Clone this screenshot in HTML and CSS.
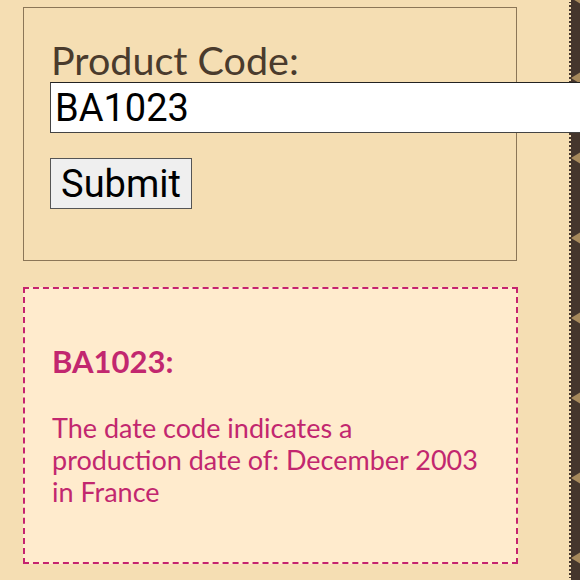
FILE: index.html
```html
<!DOCTYPE html>
<html>
<head>
<meta charset="utf-8">
<link rel="stylesheet" href="styles.css">
</head>
<body>
<div class="page">
  <main class="main">
    <form class="lookup">
      <label class="label" for="code">Product Code:</label>
      <input class="code-input" id="code" type="text" value="BA1023">
      <button class="submit" type="button">Submit</button>
    </form>
    <section class="result">
      <h2 class="result-title">BA1023:</h2>
      <p class="result-text">The date code indicates a production date of: December 2003 in France</p>
    </section>
  </main>
  <aside class="strip">
    <svg class="strip-art" width="11" height="580" viewBox="0 0 11 580">
      <defs>
        <pattern id="tri" x="0" y="-2" width="11" height="80" patternUnits="userSpaceOnUse">
          <polygon points="2,0 12,-6 12,6" fill="#a88a5c"/>
          <polygon points="2,80 12,74 12,86" fill="#a88a5c"/>
        </pattern>
      </defs>
      <rect x="0" y="0" width="11" height="580" fill="url(#tri)"/>
    </svg>
  </aside>
</div>
</body>
</html>
```
FILE: styles.css
```css
html, body {
  margin: 0;
  padding: 0;
  background: #f5deb3;
  overflow: hidden;
}
.page {
  display: flex;
  width: 580px;
  height: 580px;
}
.main {
  width: 569px;
  flex: none;
  padding: 7px 0 0 23px;
  box-sizing: border-box;
}
.lookup {
  width: 494px;
  height: 254px;
  box-sizing: border-box;
  border: 1px solid #8b7657;
  padding: 29px 0 0 26px;
  display: flex;
  flex-direction: column;
  align-items: flex-start;
}
.label {
  font-family: Lato, "Noto Sans", sans-serif;
  font-size: 39.5px;
  line-height: 45px;
  color: #4a3b2d;
  margin-left: 1px;
}
.code-input {
  position: relative;
  z-index: 1;
  width: 560px;
  height: 51px;
  box-sizing: border-box;
  margin: 0;
  padding: 0 4px;
  border: 1px solid #444;
  border-top-color: #222;
  background: #fff;
  font-family: Roboto, sans-serif;
  font-size: 38px;
  color: #000;
}
.submit {
  margin-top: 25px;
  width: 142px;
  height: 51px;
  box-sizing: border-box;
  padding: 0;
  border: 1px solid #555;
  background: #efefef;
  font-family: Roboto, sans-serif;
  font-size: 38px;
  color: #000;
}
.result {
  margin-top: 26px;
  width: 495px;
  height: 277px;
  box-sizing: border-box;
  background: #ffebcd;
  border: 2px dashed #c5236f;
  padding: 52px 31px 0 27px;
  font-family: Lato, "Noto Sans", sans-serif;
  color: #c2276f;
}
.result-title {
  margin: 0;
  font-size: 31px;
  line-height: 40px;
  font-weight: 700;
}
.result-text {
  margin: 31px 0 0;
  font-size: 27px;
  line-height: 32px;
}
.strip {
  flex: 1;
  background: #45362d;
  border-left: 2px dotted #f5deb3;
  display: flex;
}
.strip-art {
  display: block;
  margin-left: -2px;
}
```
